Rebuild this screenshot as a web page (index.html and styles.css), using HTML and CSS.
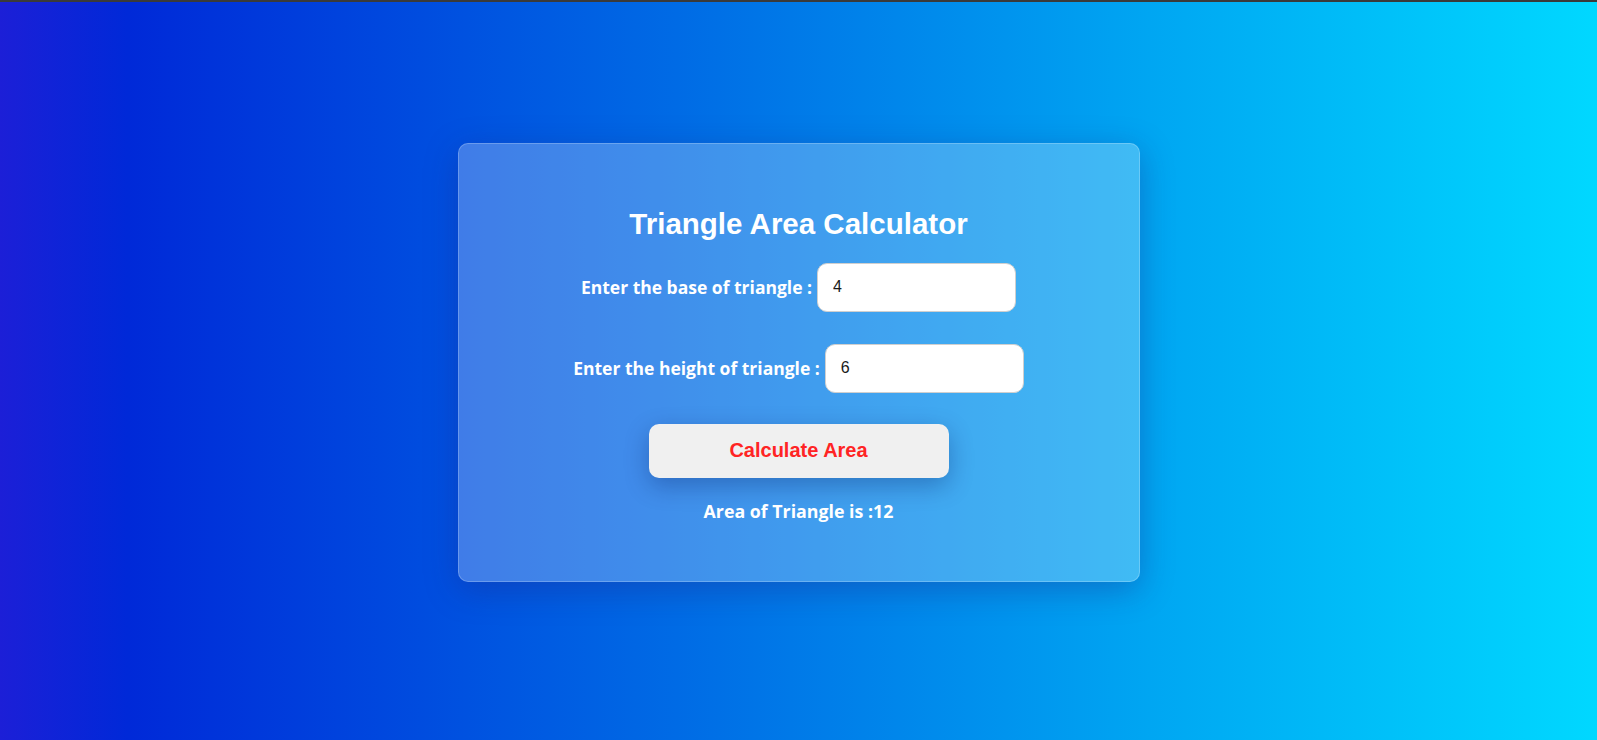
FILE: index.html
```html
<!DOCTYPE html>
<html lang="en">
<head>
<meta charset="UTF-8">
<title>Triangle Area Calculator</title>
<link rel="stylesheet" href="styles.css">
</head>
<body>
  <main class="card">
    <h1 class="title">Triangle Area Calculator</h1>
    <div class="row row-first">
      <label class="label" for="base">Enter the base of triangle :</label>
      <input class="field" id="base" type="text" value="4">
    </div>
    <div class="row row-second">
      <label class="label" for="height">Enter the height of triangle :</label>
      <input class="field" id="height" type="text" value="6">
    </div>
    <button class="calc-btn" type="button">Calculate Area</button>
    <p class="result">Area of Triangle is :12</p>
  </main>
</body>
</html>
```

FILE: styles.css
```css
html, body {
  margin: 0;
  padding: 0;
}

body {
  box-sizing: border-box;
  height: 100vh;
  border-top: 2px solid #3a3a3a;
  padding-bottom: 18px;
  display: flex;
  align-items: center;
  justify-content: center;
  background: linear-gradient(to right, #1c1fd7 0%, #0029d8 8%, #0070e6 45%, #00a6f2 72%, #00d8ff 100%);
  font-family: "Open Sans", "Liberation Sans", sans-serif;
}

.card {
  box-sizing: border-box;
  width: 682px;
  padding: 63px 20px 58px;
  display: flex;
  flex-direction: column;
  align-items: center;
  background: rgba(255, 255, 255, 0.25);
  border: 1px solid rgba(255, 255, 255, 0.22);
  border-radius: 10px;
  box-shadow: 0 8px 32px 0 rgba(31, 38, 135, 0.37);
}

.title {
  margin: 0;
  font-family: "Liberation Sans", Arial, sans-serif;
  font-weight: 700;
  font-size: 29.5px;
  line-height: 34px;
  color: #ffffff;
}

.row {
  display: flex;
  align-items: center;
  justify-content: center;
  gap: 5px;
}

.row-first {
  margin-top: 22px;
}

.row-second {
  margin-top: 32px;
}

.label {
  font-family: "Open Sans", "Liberation Sans", sans-serif;
  font-weight: 700;
  font-size: 17.5px;
  color: #ffffff;
}

.field {
  box-sizing: border-box;
  width: 199px;
  height: 49px;
  padding: 0 15px;
  border: 1px solid #cfcfcf;
  border-radius: 10px;
  background: #ffffff;
  font-family: "Liberation Sans", Arial, sans-serif;
  font-size: 16px;
  color: #1a1a1a;
  outline: none;
}

.calc-btn {
  margin-top: 31px;
  width: 300px;
  height: 54px;
  border: none;
  border-radius: 10px;
  background: #f0f0f0;
  color: #ff2424;
  font-family: "Liberation Sans", Arial, sans-serif;
  font-weight: 700;
  font-size: 20px;
  box-shadow: 0 8px 24px rgba(0, 20, 90, 0.3);
  cursor: pointer;
}

.result {
  margin: 21px 0 0;
  font-family: "Open Sans", "Liberation Sans", sans-serif;
  font-weight: 700;
  font-size: 17.8px;
  line-height: 24px;
  color: #ffffff;
}
```
